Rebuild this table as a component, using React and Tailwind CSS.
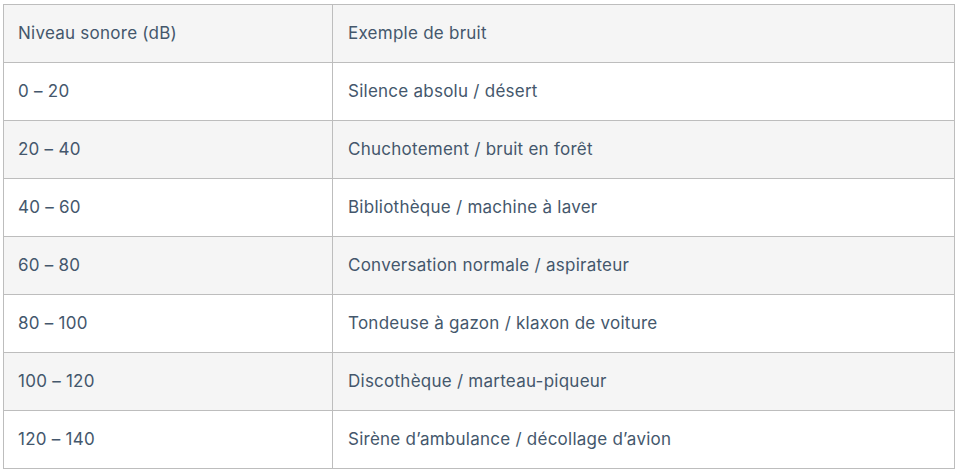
import React from "react";

const rows = [
  ["0 – 20", "Silence absolu / désert"],
  ["20 – 40", "Chuchotement / bruit en forêt"],
  ["40 – 60", "Bibliothèque / machine à laver"],
  ["60 – 80", "Conversation normale / aspirateur"],
  ["80 – 100", "Tondeuse à gazon / klaxon de voiture"],
  ["100 – 120", "Discothèque / marteau-piqueur"],
  ["120 – 140", "Sirène d’ambulance / décollage d’avion"],
];

export default function App() {
  return (
    <div className="min-h-screen bg-white pl-[3px] pt-[4px]" style={{ fontFamily: "Inter, 'Noto Sans', sans-serif" }}>
      <table className="w-[952px] table-fixed border-collapse text-[17px] tracking-[0.25px] text-[#44576c]">
        <colgroup>
          <col className="w-[329px]" />
          <col />
        </colgroup>
        <thead>
          <tr className="h-[58px] bg-[#f5f5f5]">
            <th className="border border-[#bdbdbd] px-[14px] text-left font-normal">Niveau sonore (dB)</th>
            <th className="border border-[#bdbdbd] px-[15px] text-left font-normal">Exemple de bruit</th>
          </tr>
        </thead>
        <tbody>
          {rows.map(([level, example], i) => (
            <tr key={level} className={i % 2 === 1 ? "h-[58px] bg-[#f5f5f5]" : "h-[58px] bg-white"}>
              <td className="border border-[#bdbdbd] px-[14px]">{level}</td>
              <td className="border border-[#bdbdbd] px-[15px]">{example}</td>
            </tr>
          ))}
        </tbody>
      </table>
    </div>
  );
}
